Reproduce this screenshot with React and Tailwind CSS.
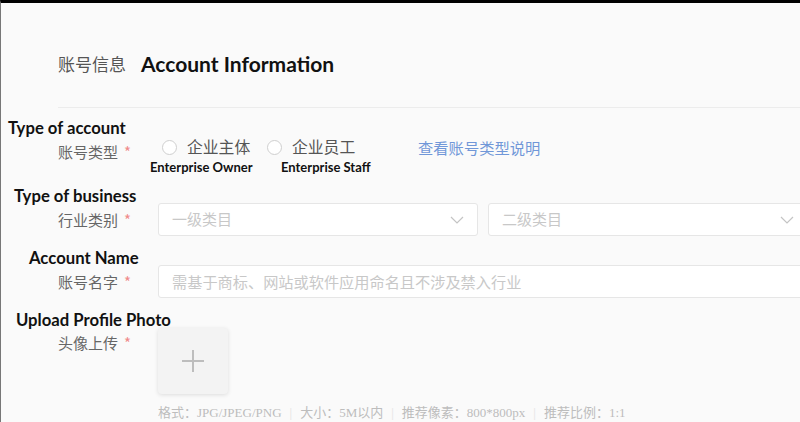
import React from "react";

const cjk = { fontFamily: '"Noto Sans CJK SC", "Noto Sans", sans-serif' };
const en = { fontFamily: 'Lato, "Noto Sans", sans-serif' };

function Chevron() {
  return (
    <svg width="14" height="8" viewBox="0 0 14 8" fill="none">
      <path d="M1 1l6 6 6-6" stroke="#c4c4c4" strokeWidth="1.2" />
    </svg>
  );
}

function Label({ children, className = "" }) {
  return (
    <div className={"w-[146px] shrink-0 pr-[16px] text-right text-[15px] leading-[20px] text-[#666] " + className} style={cjk}>
      {children}
      <span className="ml-[6px] text-[#f08a8a]">*</span>
    </div>
  );
}

function EnLabel({ children, className = "" }) {
  return (
    <div className={"text-[16.7px] font-bold leading-[20px] text-[#111] " + className} style={en}>
      {children}
    </div>
  );
}

function Radio({ zh, en: enText, className = "", subClass = "" }) {
  return (
    <div className={"flex flex-col items-start " + className}>
      <div className="flex h-[18px] items-center">
        <span className="h-[15px] w-[15px] rounded-full border border-[#cfcfcf] bg-white" />
        <span className="ml-[10px] text-[15.8px] leading-[18px] text-[#555]" style={cjk}>{zh}</span>
      </div>
      <div className={"mt-[3px] whitespace-nowrap text-[13px] font-bold leading-[16px] text-[#111] " + subClass} style={en}>{enText}</div>
    </div>
  );
}

export default function App() {
  return (
    <div className="h-[422px] w-[800px] overflow-hidden border-l border-t-[3px] border-l-[#777] border-t-black bg-[#fafafa]">
      <div className="flex items-center pl-[57px] pt-[47px]">
        <span className="text-[17px] leading-[28px] text-[#555]" style={cjk}>账号信息</span>
        <span className="ml-[15px] text-[21px] font-bold leading-[28px] text-[#111]" style={en}>Account Information</span>
      </div>
      <div className="ml-[57px] mt-[29px] h-[1px] w-[900px] bg-[#ececec]" />

      <EnLabel className="ml-[7px] mt-[10px]">Type of account</EnLabel>
      <div className="flex items-start">
        <Label className="mt-[4px]">账号类型</Label>
        <div className="ml-[15px] flex items-start">
          <Radio zh="企业主体" en="Enterprise Owner" className="w-[105px]" subClass="ml-[-12px]" />
          <Radio zh="企业员工" en="Enterprise Staff" className="w-[151px]" subClass="ml-[14px]" />
        </div>
        <span className="text-[15.3px] leading-[18px] text-[#7097d8]" style={cjk}>查看账号类型说明</span>
      </div>

      <EnLabel className="ml-[13px] mt-[11px]">Type of business</EnLabel>
      <div className="mt-[-3px] flex items-center">
        <Label>行业类别</Label>
        <div className="ml-[11px] flex gap-[10px]">
          <div className="flex h-[33px] w-[320px] items-center justify-between rounded-[3px] border border-[#e6e6e6] bg-white pl-[13px] pr-[13px]">
            <span className="text-[15px] text-[#c8c8c8]" style={cjk}>一级类目</span>
            <Chevron />
          </div>
          <div className="flex h-[33px] w-[320px] items-center justify-between rounded-[3px] border border-[#e6e6e6] bg-white pl-[13px] pr-[13px]">
            <span className="text-[15px] text-[#c8c8c8]" style={cjk}>二级类目</span>
            <Chevron />
          </div>
        </div>
      </div>

      <EnLabel className="ml-[28px] mt-[12px]">Account Name</EnLabel>
      <div className="mt-[-3px] flex items-center">
        <Label>账号名字</Label>
        <div className="ml-[11px] flex h-[33px] w-[650px] shrink-0 items-center rounded-[3px] border border-[#e6e6e6] bg-white pl-[13px]">
          <span className="text-[15.2px] text-[#c8c8c8]" style={cjk}>需基于商标、网站或软件应用命名且不涉及禁入行业</span>
        </div>
      </div>

      <EnLabel className="ml-[15px] mt-[12px]">Upload Profile Photo</EnLabel>
      <div className="mt-[-2px] flex items-start">
        <Label className="mt-[5px]">头像上传</Label>
        <div className="ml-[11px] flex h-[66px] w-[70px] items-center justify-center rounded-[4px] bg-[#f3f3f3] shadow-[0_1px_4px_rgba(0,0,0,0.12)]">
          <svg width="24" height="24" viewBox="0 0 24 24">
            <path d="M12 1v22M1 12h22" stroke="#bdbdbd" strokeWidth="2" />
          </svg>
        </div>
      </div>

      <div className="ml-[157px] mt-[11px] flex items-center text-[13px] leading-[16px] text-[#bdbdbd]" style={{ fontFamily: '"Liberation Serif", "Noto Sans CJK SC", serif' }}>
        <span>格式：JPG/JPEG/PNG</span>
        <span className="mx-[8px] text-[#e3e3e3]">|</span>
        <span>大小：5M以内</span>
        <span className="mx-[8px] text-[#e3e3e3]">|</span>
        <span>推荐像素：800*800px</span>
        <span className="mx-[8px] text-[#e3e3e3]">|</span>
        <span>推荐比例：1:1</span>
      </div>
    </div>
  );
}
